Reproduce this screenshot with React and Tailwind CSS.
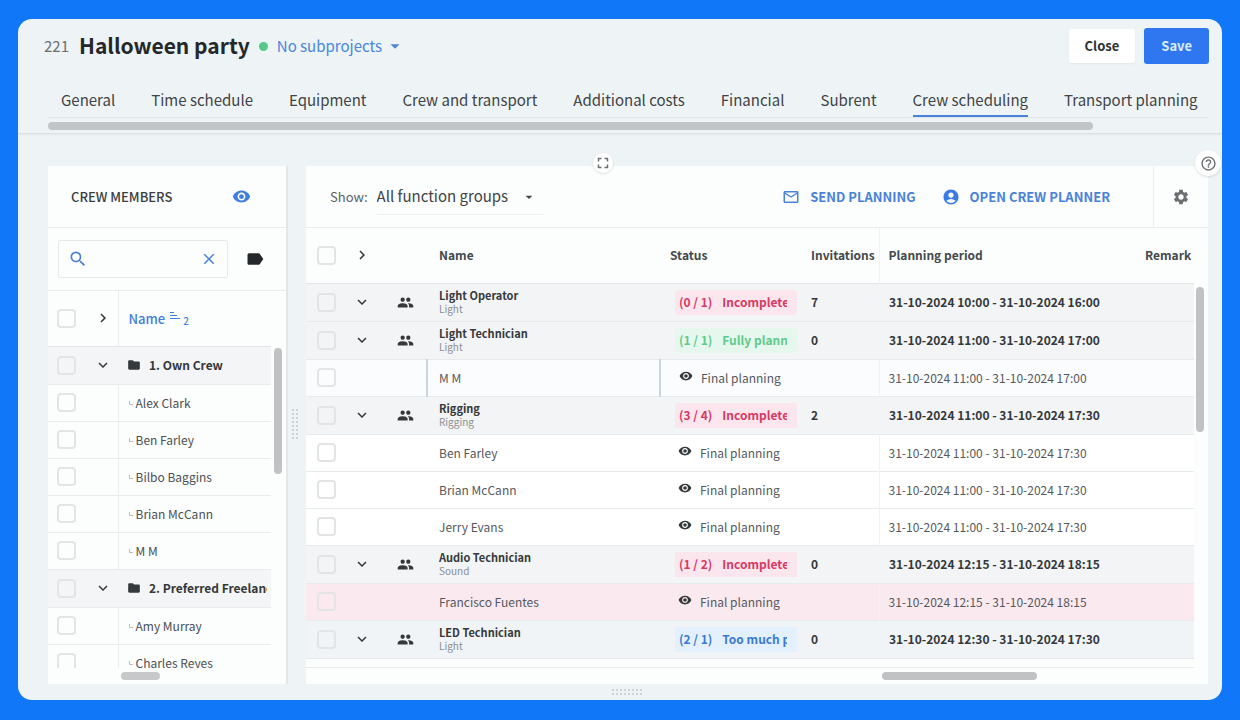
import React, { useState } from 'react';
import {
  MdAccountCircle,
  MdArrowDropDown,
  MdChevronRight,
  MdClose,
  MdExpandMore,
  MdFolder,
  MdFullscreen,
  MdGroup,
  MdHelpOutline,
  MdLabel,
  MdMailOutline,
  MdSearch,
  MdSettings,
  MdVisibility,
} from 'react-icons/md';

const TABS = [
  'General',
  'Time schedule',
  'Equipment',
  'Crew and transport',
  'Additional costs',
  'Financial',
  'Subrent',
  'Crew scheduling',
  'Transport planning',
];

const CREW = [
  { group: true, name: '1. Own Crew' },
  { name: 'Alex Clark' },
  { name: 'Ben Farley' },
  { name: 'Bilbo Baggins' },
  { name: 'Brian McCann' },
  { name: 'M M' },
  { group: true, name: '2. Preferred Freelancers' },
  { name: 'Amy Murray' },
  { name: 'Charles Reyes' },
];

const STATUS = {
  incomplete: { label: 'Incomplete', style: 'bg-[#fbe6ee] text-[#d63a66]' },
  full: { label: 'Fully planned', style: 'bg-[#e6f8ee] text-[#5ecb8b]' },
  over: { label: 'Too much planned', style: 'bg-[#e4f0fb] text-[#3a7bd5]' },
};

const PLANNING = [
  { group: true, name: 'Light Operator', type: 'Light', count: '(0 / 1)', status: 'incomplete', invitations: 7, period: '31-10-2024 10:00 - 31-10-2024 16:00', bg: 'bg-[#f3f4f6]' },
  { group: true, name: 'Light Technician', type: 'Light', count: '(1 / 1)', status: 'full', invitations: 0, period: '31-10-2024 11:00 - 31-10-2024 17:00', bg: 'bg-[#f3f4f6]' },
  { name: 'M M', period: '31-10-2024 11:00 - 31-10-2024 17:00', bg: 'bg-[#fbfcfe]', selected: true },
  { group: true, name: 'Rigging', type: 'Rigging', count: '(3 / 4)', status: 'incomplete', invitations: 2, period: '31-10-2024 11:00 - 31-10-2024 17:30', bg: 'bg-[#f3f4f5]' },
  { name: 'Ben Farley', period: '31-10-2024 11:00 - 31-10-2024 17:30', bg: 'bg-white' },
  { name: 'Brian McCann', period: '31-10-2024 11:00 - 31-10-2024 17:30', bg: 'bg-white' },
  { name: 'Jerry Evans', period: '31-10-2024 11:00 - 31-10-2024 17:30', bg: 'bg-white' },
  { group: true, name: 'Audio Technician', type: 'Sound', count: '(1 / 2)', status: 'incomplete', invitations: 0, period: '31-10-2024 12:15 - 31-10-2024 18:15', bg: 'bg-[#f3f4f5]' },
  { name: 'Francisco Fuentes', period: '31-10-2024 12:15 - 31-10-2024 18:15', bg: 'bg-[#fbe9f0]' },
  { group: true, name: 'LED Technician', type: 'Light', count: '(2 / 1)', status: 'over', invitations: 0, period: '31-10-2024 12:30 - 31-10-2024 17:30', bg: 'bg-[#f0f4f7]' },
];

const Checkbox = ({ label }) => (
  <input
    type="checkbox"
    aria-label={label}
    className="block size-[19px] appearance-none rounded-[4px] border-2 border-[#e3e4e6] checked:bg-[#2f77f1]"
  />
);

const Toggle = ({ open, label }) => (
  <button type="button" aria-label={label} className="block text-[#333739]">
    {open ? <MdExpandMore className="size-[18px]" /> : <MdChevronRight className="size-[18px]" />}
  </button>
);

// Dotted grip of a resizable splitter
const Grip = ({ vertical }) => (
  <svg width={vertical ? 6 : 34} height={vertical ? 34 : 6} className="shrink-0">
    {Array.from({ length: 16 }, (_, i) => {
      const along = 1 + Math.floor(i / 2) * 4;
      const across = (i % 2) * 4;
      return (
        <rect
          key={i}
          x={vertical ? across : along}
          y={vertical ? along : across}
          width="2"
          height="2"
          fill="#cdd2d5"
        />
      );
    })}
  </svg>
);

const Header = () => (
  <header className="flex h-[62px] shrink-0 items-center pt-2 pr-[13px] pb-4 pl-[26px]">
    <span className="mr-[10px] text-[15px] text-[#6b7073]">221</span>
    <h1 className="text-[21px] font-bold text-[#24282a]">Halloween party</h1>
    <span className="mx-[9px] size-[9px] rounded-full bg-[#56c98a]" />
    <button type="button" className="flex items-center text-[15px] text-[#4a86dc]">
      No subprojects
      <MdArrowDropDown className="ml-0.5 size-[22px]" />
    </button>
    <div className="ml-auto flex items-center gap-[9px]">
      <button type="button" className="h-[34px] rounded-xs bg-white px-4 text-[13px] font-bold text-[#2d3133] shadow-xs">
        Close
      </button>
      <button type="button" className="h-9 rounded-[3px] bg-[#2f77f1] px-[17px] text-[13px] font-bold text-[#dcebff]">
        Save
      </button>
    </div>
  </header>
);

const Tabs = ({ active, onChange }) => (
  <nav className="shrink-0 border-b border-[#dfe2e4] pl-[30px] shadow-xs">
    <div className="mr-[13px] flex gap-9 border-b border-[#e2e6e9] pl-[13px]">
      {TABS.map((tab) => (
        <button
          key={tab}
          type="button"
          onClick={() => onChange(tab)}
          className={
            tab === active
              ? 'h-9 border-b-2 border-[#4a82d9] pt-1 whitespace-nowrap text-[15px] text-[#3f4447]'
              : 'h-9 border-b-2 border-transparent pt-1 whitespace-nowrap text-[15px] text-[#3f4447]'
          }
        >
          {tab}
        </button>
      ))}
    </div>
    <div className="mr-[13px] pt-1 pb-[3px]">
      <div className="h-2 w-[90%] rounded-full bg-[#c1c5c7]" />
    </div>
  </nav>
);

const CrewMembers = () => {
  const [query, setQuery] = useState('');

  return (
    <aside className="flex w-[240px] shrink-0 flex-col border-r-2 border-[#e3e7ea] bg-[#fcfdfd]">
      <div className="flex h-[62px] shrink-0 items-center justify-between border-b border-[#e9edf0] pr-[35px] pl-[23px]">
        <h2 className="text-[13px] font-medium text-[#3a3f42]">CREW MEMBERS</h2>
        <button type="button" aria-label="Show crew members" className="text-[#3f7fe0]">
          <MdVisibility className="size-[19px]" />
        </button>
      </div>

      {/* Search */}
      <div className="flex h-[63px] shrink-0 items-center border-b border-[#e9edf0] pl-[10px]">
        <div className="flex h-[38px] w-[170px] items-center rounded-xs border border-[#e6e9eb] px-[9px] text-[#4a82d9]">
          <MdSearch className="size-5 shrink-0" />
          <input
            type="text"
            aria-label="Search crew members"
            value={query}
            onChange={(e) => setQuery(e.target.value)}
            className="min-w-0 flex-1 bg-transparent px-1 text-[13px] text-[#3f4447] outline-none"
          />
          <button type="button" aria-label="Clear search" onClick={() => setQuery('')}>
            <MdClose className="size-[18px]" />
          </button>
        </div>
        <button type="button" aria-label="Filter by tag" className="ml-[17px] text-[#24282a]">
          <MdLabel className="size-5" />
        </button>
      </div>

      <div className="flex min-h-0 flex-1">
        <div className="min-h-0 flex-1 overflow-hidden">
          <table className="w-full table-fixed text-xs text-[#4b5053]">
            <colgroup>
              <col className="w-[38px]" />
              <col className="w-8" />
              <col />
            </colgroup>
            <thead>
              <tr className="h-[55px] border-b border-[#e3e6e8]">
                <th className="pl-[9px]"><Checkbox label="Select all crew members" /></th>
                <th className="pl-2"><Toggle label="Expand all" /></th>
                <th className="border-l border-[#e9edf0] pl-[10px] text-left text-[13px] font-medium text-[#3f7fe0]">
                  <span className="flex items-center">
                    Name
                    <svg width="12" height="10" viewBox="0 0 12 10" className="mb-1 ml-1" stroke="currentColor">
                      <path d="M1 1.5h4M1 4.5h7M1 7.5h10" />
                    </svg>
                    <sub className="ml-0.5 text-[10px]">2</sub>
                  </span>
                </th>
              </tr>
            </thead>
            <tbody>
              {CREW.map((row) =>
                row.group ? (
                  <tr key={row.name} className="h-[38px] border-b border-[#e9ebed] bg-[#f4f5f6]">
                    <td className="pl-[9px]"><Checkbox label={row.name} /></td>
                    <td className="pl-2"><Toggle open label={`Collapse ${row.name}`} /></td>
                    <td className="pr-1 pl-[9px] font-bold text-[#35393b]">
                      <span className="flex items-center gap-2 overflow-hidden whitespace-nowrap">
                        <MdFolder className="size-[14px] shrink-0" />
                        {row.name}
                      </span>
                    </td>
                  </tr>
                ) : (
                  <tr key={row.name} className="h-[37px] border-b border-[#e9ebed]">
                    <td className="pl-[9px]"><Checkbox label={row.name} /></td>
                    <td />
                    <td className="border-l border-[#e9edf0] pl-[10px]">
                      <span className="flex items-center gap-[3px] whitespace-nowrap">
                        <svg width="4" height="4" viewBox="0 0 4 4" fill="none" stroke="#b9bdc0" className="shrink-0">
                          <path d="M.5 0v3.5H4" />
                        </svg>
                        {row.name}
                      </span>
                    </td>
                  </tr>
                )
              )}
            </tbody>
          </table>
        </div>
        <div className="w-[15px] shrink-0 pt-[57px] pl-[3px]">
          <div className="h-[126px] w-2 rounded-full bg-[#c1c2c3]" />
        </div>
      </div>

      <div className="h-4 shrink-0 pt-1 pl-[73px]">
        <div className="h-2 w-[39px] rounded-full bg-[#c6c8c9]" />
      </div>
    </aside>
  );
};

const PlanningToolbar = () => (
  <div className="flex h-[62px] shrink-0 items-center border-b border-[#e9edf0] pl-6">
    <label htmlFor="function-group" className="mr-[9px] text-[13px] text-[#5a5f62]">Show:</label>
    <div className="relative flex items-center">
      <select
        id="function-group"
        className="h-9 w-[166px] appearance-none border-b border-[#edf0f2] bg-transparent text-[15px] text-[#3f4447] outline-none"
      >
        <option>All function groups</option>
      </select>
      <MdArrowDropDown className="pointer-events-none absolute right-[6px] size-4 text-[#3f4447]" />
    </div>
    <button type="button" className="ml-auto flex items-center gap-[10px] text-[13px] font-bold text-[#4a82d9]">
      <MdMailOutline className="size-[18px]" />
      SEND PLANNING
    </button>
    <button type="button" className="ml-[26px] flex items-center gap-[10px] text-[13px] font-bold text-[#4a82d9]">
      <MdAccountCircle className="size-[18px] text-[#3a7be8]" />
      OPEN CREW PLANNER
    </button>
    <div className="ml-[43px] flex h-[60px] w-[55px] items-center justify-center border-l border-[#e9edf0]">
      <button type="button" aria-label="Settings" className="text-[#6b6f72]">
        <MdSettings className="size-[18px]" />
      </button>
    </div>
  </div>
);

const StatusBadge = ({ count, status }) => (
  <div className={`ml-[15px] h-[25px] w-[122px] rounded-xs pr-[10px] pl-1 font-bold ${STATUS[status].style}`}>
    <div className="flex h-full items-center gap-[10px] overflow-hidden whitespace-nowrap">
      <span>{count}</span>
      <span>{STATUS[status].label}</span>
    </div>
  </div>
);

const PlanningRow = ({ row }) => {
  if (row.group) {
    return (
      <tr className={`h-[38px] border-b border-[#e8ebee] font-bold text-[#35393b] ${row.bg}`}>
        <td className="pl-[11px]"><Checkbox label={row.name} /></td>
        <td className="pl-[7px]"><Toggle open label={`Collapse ${row.name}`} /></td>
        <td className="pl-[18px]"><MdGroup className="size-[17px]" /></td>
        <td className="pl-3 text-[11px] leading-[13px]">
          {row.name}
          <div className="text-[10px] font-normal text-[#8b8f92]">{row.type}</div>
        </td>
        <td><StatusBadge count={row.count} status={row.status} /></td>
        <td className="pl-[10px]">{row.invitations}</td>
        <td className="pl-[10px] whitespace-nowrap">{row.period}</td>
        <td />
      </tr>
    );
  }

  return (
    <tr className={`h-[37px] border-b border-[#e8ebee] ${row.bg}`}>
      <td className="pl-[11px]"><Checkbox label={row.name} /></td>
      <td />
      <td />
      <td className={row.selected ? 'border-x-2 border-[#c8d6df] pl-[11px]' : 'pl-3'}>{row.name}</td>
      <td className="pl-[18px]">
        <span className="flex items-center gap-2">
          <MdVisibility className="mb-1 size-[14px] text-[#35393b]" />
          Final planning
        </span>
      </td>
      <td />
      <td className="border-l border-[#f0f2f4] pl-[9px] whitespace-nowrap">{row.period}</td>
      <td />
    </tr>
  );
};

const Planning = () => (
  <section className="flex min-w-0 flex-1 flex-col bg-[#fcfdfd]">
    <PlanningToolbar />
    <div className="flex min-h-0 flex-1">
      <div className="min-h-0 min-w-0 flex-1 overflow-hidden border-b border-[#e8ebee]">
        <table className="w-full table-fixed text-xs text-[#55595c]">
          <colgroup>
            <col className="w-10" />
            <col className="w-[33px]" />
            <col className="w-12" />
            <col />
            <col className="w-[141px]" />
            <col className="w-[78px]" />
            <col className="w-[257px]" />
            <col className="w-[58px]" />
          </colgroup>
          <thead>
            <tr className="h-[55px] border-b border-[#e3e6e8] text-left text-[#44494c] [&>th]:font-bold">
              <th className="pl-[11px]"><Checkbox label="Select all functions" /></th>
              <th className="pl-[7px]"><Toggle label="Expand all" /></th>
              <th />
              <th className="pl-3">Name</th>
              <th className="pl-[10px]">Status</th>
              <th className="pl-[10px]">Invitations</th>
              <th className="border-l border-[#f0f2f4] pl-[9px]">Planning period</th>
              <th className="pl-[9px]">Remark</th>
            </tr>
          </thead>
          <tbody>
            {PLANNING.map((row, i) => (
              <PlanningRow key={i} row={row} />
            ))}
          </tbody>
        </table>
      </div>
      <div className="w-[14px] shrink-0 pt-[59px] pl-[2px]">
        <div className="h-[145px] w-2 rounded-full bg-[#c1c2c3]" />
      </div>
    </div>
    <div className="flex h-4 shrink-0 justify-end pt-1 pr-[171px]">
      <div className="h-2 w-[155px] rounded-full bg-[#c1c2c3]" />
    </div>
  </section>
);

const App = () => {
  const [activeTab, setActiveTab] = useState('Crew scheduling');

  return (
    <div className="h-screen bg-[#1078f8] px-[18px] pt-[19px] pb-5 font-['Noto_Sans_CJK_SC','Noto_Sans',sans-serif]">
      <div className="flex h-full flex-col overflow-hidden rounded-[14px] bg-[#eef3f6]">
        <Header />
        <Tabs active={activeTab} onChange={setActiveTab} />

        <main className="relative flex min-h-0 flex-1 flex-col pt-8 pr-[14px] pl-[30px]">
          <div className="flex min-h-0 flex-1">
            <CrewMembers />
            <div className="flex w-[18px] shrink-0 items-center pl-1">
              <Grip vertical />
            </div>
            <Planning />
          </div>
          <div className="flex h-4 shrink-0 items-center justify-center">
            <Grip />
          </div>

          {/* Round buttons over the panel edge */}
          <button
            type="button"
            aria-label="Fullscreen"
            className="absolute top-[19px] left-[575px] flex size-5 items-center justify-center rounded-full bg-white text-[#6b6f72] shadow"
          >
            <MdFullscreen className="size-[18px]" />
          </button>
          <button
            type="button"
            aria-label="Help"
            className="absolute top-4 right-px flex size-[26px] items-center justify-center rounded-full bg-white text-[#6b6f72] shadow"
          >
            <MdHelpOutline className="size-[17px]" />
          </button>
        </main>
      </div>
    </div>
  );
};

export default App;
